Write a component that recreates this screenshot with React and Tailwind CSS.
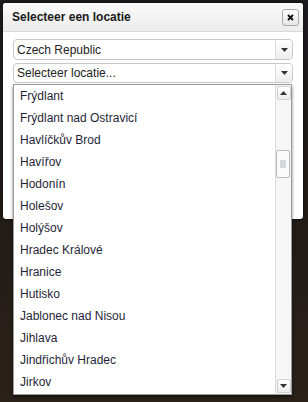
import React from "react";

const places = [
  "Frýdlant",
  "Frýdlant nad Ostravicí",
  "Havlíčkův Brod",
  "Havířov",
  "Hodonín",
  "Holešov",
  "Holýšov",
  "Hradec Králové",
  "Hranice",
  "Hutisko",
  "Jablonec nad Nisou",
  "Jihlava",
  "Jindřichův Hradec",
  "Jirkov",
];

const Caret = ({ up }) => (
  <svg width="7" height="4" viewBox="0 0 7 4" className={up ? "rotate-180" : ""}>
    <path d="M0 0h7L3.5 4z" fill="#333" />
  </svg>
);

const SelectBox = ({ label, className }) => (
  <div
    className={`flex items-stretch border border-[#c8c8c8] rounded-[4px] bg-white ${className}`}
  >
    <div className="flex-1 flex items-center pl-[3px] text-[12px] text-[#222] truncate">
      {label}
    </div>
    <div className="w-[17px] flex items-center justify-center border-l border-[#dcdcdc] bg-gradient-to-b from-white to-[#ededed] rounded-r-[4px]">
      <Caret />
    </div>
  </div>
);

export default function App() {
  return (
    <div
      className="relative w-[308px] h-[402px] overflow-hidden bg-gradient-to-b from-[#1d1c20] via-[#221c17] to-[#2a2119] pt-[3px] pl-[3px]"
      style={{ fontFamily: '"Liberation Sans", Arial, sans-serif' }}
    >
      <div className="w-[300px] h-[216px] bg-white rounded-[3px] shadow-[0_0_4px_rgba(0,0,0,0.6)]">
        {/* header */}
        <div className="h-[29px] flex items-center justify-between pl-[9px] pr-[4px] rounded-t-[3px] bg-gradient-to-b from-[#fbfbfb] to-[#ececec] border-b border-[#d8d8d8]">
          <span className="text-[12px] font-bold text-[#1a1a1a]">Selecteer een locatie</span>
          <button className="w-[17px] h-[17px] flex items-center justify-center border border-[#aaa] rounded-[3px] bg-gradient-to-b from-white to-[#e6e6e6]">
            <svg width="7" height="7" viewBox="0 0 7 7">
              <path d="M1 1l5 5M6 1L1 6" stroke="#111" strokeWidth="1.8" />
            </svg>
          </button>
        </div>

        {/* body */}
        <div className="relative px-[10px] pt-[7px]">
          <SelectBox label="Czech Republic" className="h-[21px]" />
          <SelectBox label="Selecteer locatie..." className="h-[20px] mt-[3px]" />

          {/* open dropdown list */}
          <div className="absolute left-[10px] top-[52px] w-[279px] h-[311px] bg-white border border-[#9a9a9a] shadow-[0_2px_3px_rgba(0,0,0,0.5)] flex">
            <ul className="flex-1 pl-[6px]">
              {places.map((p) => (
                <li
                  key={p}
                  className="h-[22px] flex items-center text-[12px] text-[#1f1f38] whitespace-nowrap"
                >
                  {p}
                </li>
              ))}
            </ul>
            <div className="w-[16px] border-l border-[#dcdcdc] bg-[#f6f6f6] flex flex-col items-center py-[1px]">
              <div className="w-[14px] h-[14px] flex items-center justify-center border border-[#cfcfcf] rounded-[2px] bg-gradient-to-b from-white to-[#ececec]">
                <Caret up />
              </div>
              <div className="flex-1 w-full relative">
                <div className="absolute left-0 top-[50px] w-[14px] h-[28px] border border-[#bdbdbd] rounded-[2px] bg-[#fafafa] flex items-center justify-center">
                  <div className="w-[6px] h-[8px] bg-[#d4d8dc]" />
                </div>
              </div>
              <div className="w-[14px] h-[14px] flex items-center justify-center border border-[#cfcfcf] rounded-[2px] bg-gradient-to-b from-white to-[#ececec]">
                <Caret />
              </div>
            </div>
          </div>
        </div>
      </div>
    </div>
  );
}
